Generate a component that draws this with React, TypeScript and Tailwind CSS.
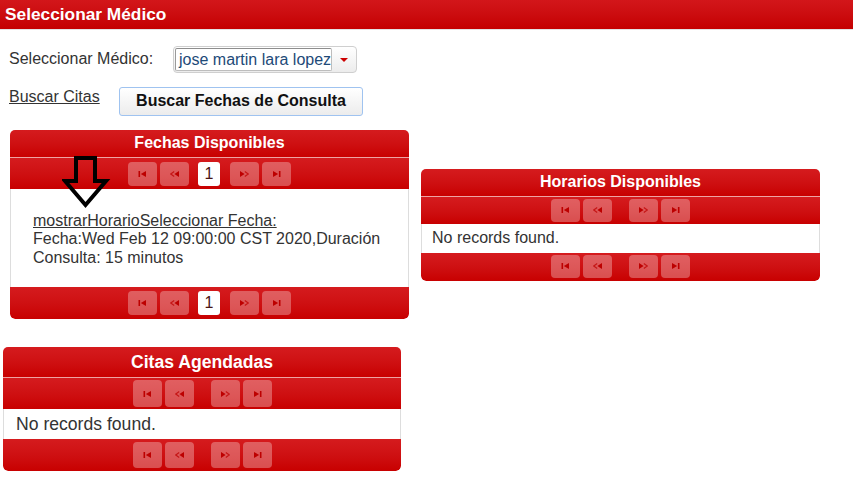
import React from "react";

type IconKind = "first" | "prev" | "next" | "last";

// iconos del paginador
const PagerIcon = ({ kind }: { kind: IconKind }) => {
  const flip = kind === "next" || kind === "last";
  return (
    <svg
      width="9"
      height="6"
      viewBox="0 0 9 6"
      className={flip ? "-scale-x-100" : ""}
      fill="#bd0000"
    >
      {kind === "first" || kind === "last" ? (
        <>
          <rect x="0.5" y="0" width="1.6" height="6" />
          <polygon points="8,0 2.8,3 8,6" />
        </>
      ) : (
        <>
          <polyline
            points="4.2,0.6 0.8,3 4.2,5.4"
            fill="none"
            stroke="#bd0000"
            strokeWidth="1.2"
            opacity="0.75"
          />
          <polygon points="9,0 4.4,3 9,6" />
        </>
      )}
    </svg>
  );
};

const PagerButton = ({ kind, className }: { kind: IconKind; className: string }) => (
  <span
    className={
      "w-[29px] rounded-[4px] bg-white/30 flex items-center justify-center " + className
    }
  >
    <PagerIcon kind={kind} />
  </span>
);

type PagerProps = {
  pages?: boolean;
  wrap: string;
  btn: string;
};

const Paginator = ({ pages, wrap, btn }: PagerProps) => (
  <div
    className={
      "flex justify-center bg-linear-to-b from-[#d51b1e] to-[#c80000] " + wrap
    }
  >
    <PagerButton kind="first" className={btn} />
    <PagerButton kind="prev" className={btn + " ml-[3px]"} />
    {pages ? (
      <span className="ml-[9px] mr-[10px] w-[22px] rounded-[3px] bg-white flex items-center justify-center text-[16px] text-[#4a1414]">
        1
      </span>
    ) : (
      <span className="w-[17px]" />
    )}
    <PagerButton kind="next" className={btn} />
    <PagerButton kind="last" className={btn + " ml-[3px]"} />
  </div>
);

const DownArrow = () => (
  <svg
    width="50"
    height="60"
    viewBox="0 0 50 60"
    className="absolute left-[52px] top-[24px] pointer-events-none"
  >
    <polygon
      points="14,4 33,4 33,27 44,27 23.5,51 3,27 14,27"
      fill="none"
      stroke="#000"
      strokeWidth="4"
      strokeLinejoin="miter"
    />
  </svg>
);

const App = () => {
  return (
    <div className="min-h-screen bg-white font-['Liberation_Sans',Arial,sans-serif] text-[16px] leading-[1.15] text-[#333]">
      {/* barra superior */}
      <div className="h-[30px] pl-[5px] flex items-center bg-linear-to-b from-[#d3161a] to-[#c40000] border-b border-[#e3e3e3] text-white font-bold text-[17.3px]">
        Seleccionar Médico
      </div>

      {/* selector de médico */}
      <div className="flex items-center pl-[9px] mt-[16px] h-[27px]">
        <span className="w-[164px]">Seleccionar Médico:</span>
        <div className="w-[184px] h-[27px] flex border border-[#cfcfcf] rounded-[4px] bg-linear-to-b from-white to-[#ececec]">
          <div className="flex-1 my-[1px] ml-[1px] bg-white border border-[#bdbdbd] border-t-[#8d8d8d] border-l-[#9a9a9a] rounded-[2px] pl-[3px] flex items-center text-[#1d4a78] leading-none whitespace-nowrap overflow-hidden">
            jose martin lara lopez
          </div>
          <div className="w-[24px] flex items-center justify-center">
            <span className="w-0 h-0 border-l-[4px] border-r-[4px] border-t-[4px] border-l-transparent border-r-transparent border-t-[#cc0000]" />
          </div>
        </div>
      </div>

      {/* acciones */}
      <div className="flex items-start pl-[9px] mt-[14px]">
        <div className="w-[110px] pt-[1px]">
          <a className="underline text-[#333] cursor-pointer">Buscar Citas</a>
        </div>
        <button
          type="button"
          className="w-[244px] h-[29px] rounded-[3px] border border-[#9fc3f0] bg-linear-to-b from-white to-[#ececec] font-bold text-[16px] text-[#111]"
        >
          Buscar Fechas de Consulta
        </button>
      </div>

      {/* paneles de fechas y horarios */}
      <div className="flex items-center pl-[10px] mt-[14px] gap-[12px]">
        <div className="relative w-[399px] rounded-[5px] overflow-hidden">
          <div className="h-[27px] flex items-center justify-center bg-linear-to-b from-[#d51b1e] to-[#c80000] text-white font-bold">
            Fechas Disponibles
          </div>
          <Paginator
            pages
            wrap="border-t border-[#eea3a3] pt-[4px] pb-[3px]"
            btn="h-[24px]"
          />
          <div className="h-[98px] bg-white border-x border-[#dddddd] pl-[22px] pr-[10px] pt-[23px]">
            <a className="underline cursor-pointer block">
              mostrarHorarioSeleccionar Fecha:
            </a>
            <span>
              Fecha:Wed Feb 12 09:00:00 CST 2020,Duración Consulta: 15 minutos
            </span>
          </div>
          <Paginator pages wrap="pt-[4px] pb-[4px] rounded-b-[5px]" btn="h-[24px]" />
          <DownArrow />
        </div>

        <div className="w-[399px] rounded-[5px] overflow-hidden">
          <div className="h-[27px] flex items-center justify-center bg-linear-to-b from-[#d51b1e] to-[#c80000] text-white font-bold">
            Horarios Disponibles
          </div>
          <Paginator wrap="border-t border-[#eea3a3] pt-[2px] pb-[2px]" btn="h-[23px]" />
          <div className="h-[29px] bg-white border-x border-[#dddddd] pl-[10px] flex items-center">
            No records found.
          </div>
          <Paginator wrap="pt-[2px] pb-[3px] rounded-b-[5px]" btn="h-[23px]" />
        </div>
      </div>

      {/* citas agendadas */}
      <div className="pl-[3px] mt-[28px]">
        <div className="w-[398px] rounded-[5px] overflow-hidden">
          <div className="h-[30px] flex items-center justify-center bg-linear-to-b from-[#d51b1e] to-[#c80000] text-white font-bold text-[17.6px]">
            Citas Agendadas
          </div>
          <Paginator wrap="border-t border-[#eea3a3] pt-[2px] pb-[2px]" btn="h-[27px]" />
          <div className="h-[30px] bg-white border-x border-[#dddddd] pl-[12px] flex items-center text-[17.6px]">
            No records found.
          </div>
          <Paginator wrap="pt-[3px] pb-[3px] rounded-b-[5px]" btn="h-[26px]" />
        </div>
      </div>
    </div>
  );
};

export default App;
